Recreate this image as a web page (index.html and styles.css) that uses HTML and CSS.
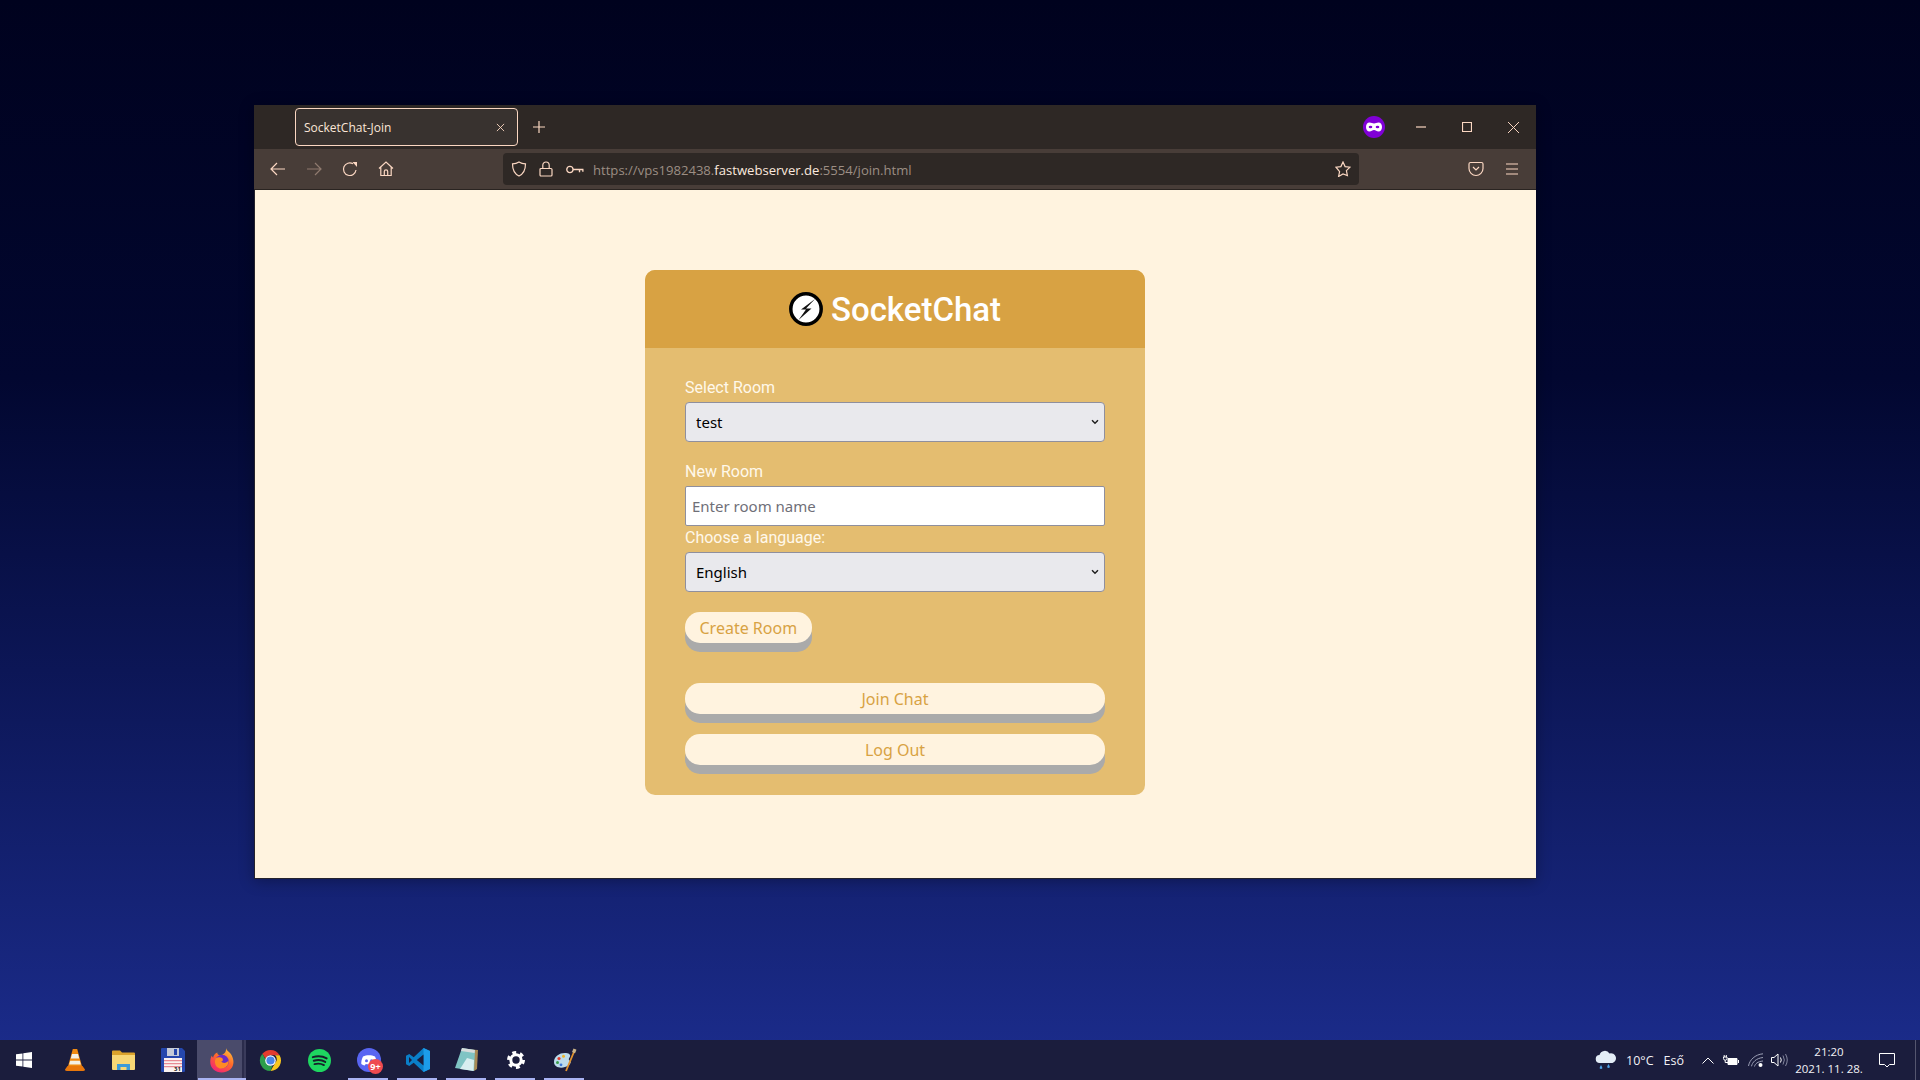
FILE: index.html
```html
<!DOCTYPE html>
<html lang="en">
<head>
  <meta charset="UTF-8">
  <meta name="viewport" content="width=device-width, initial-scale=1.0">
  <title>SocketChat-Join</title>
  <link rel="stylesheet" href="styles.css">
</head>
<body>
  <div class="desktop">
    <div class="window">
      <div class="tabbar">
        <div class="tab">
          <span class="tab-title">SocketChat-Join</span>
          <svg class="ico10" viewBox="0 0 10 10"><path d="M1 1l8 8M9 1l-8 8"/></svg>
        </div>
        <div class="newtab"><svg class="ico12" viewBox="0 0 12 12"><path d="M6 0v12M0 6h12"/></svg></div>
        <div class="grow"></div>
        <svg class="mask" viewBox="0 0 22 22">
          <circle cx="11" cy="11" r="11" fill="#8000d7"/>
          <path d="M6.5 6.500c1.800 0 3 1 4.500 1s2.700-1 4.500-1c2.200 0 3.500 2 3.500 4.500s-1.300 4.500-3.500 4.500c-1.800 0-3-1.500-4.500-1.500s-2.700 1.500-4.500 1.500C4.300 15.500 3 13.500 3 11s1.300-4.500 3.500-4.500z" fill="#fff"/>
          <ellipse cx="7.500" cy="11" rx="1.800" ry="1.300" fill="#8000d7"/>
          <ellipse cx="14.500" cy="11" rx="1.800" ry="1.300" fill="#8000d7"/>
        </svg>
        <div class="winbtn"><svg class="ico10" viewBox="0 0 10 10"><path d="M0 5h10"/></svg></div>
        <div class="winbtn"><svg class="ico10" viewBox="0 0 10 10"><path d="M.5 .5h9v9h-9z"/></svg></div>
        <div class="winbtn"><svg class="ico10 thin" viewBox="0 0 10 10"><path d="M0 0l10 10M10 0L0 10"/></svg></div>
      </div>

      <div class="toolbar">
        <div class="toolbtn"><svg class="ico16" viewBox="0 0 16 16"><path d="M15 8H1M7 2L1 8l6 6"/></svg></div>
        <div class="toolbtn dim"><svg class="ico16" viewBox="0 0 16 16"><path d="M1 8h14M9 2l6 6-6 6"/></svg></div>
        <div class="toolbtn"><svg class="ico16" viewBox="0 0 16 16"><path d="M14 9a6.300 6.300 0 1 1-3-6.200"/><path d="M10.500 1L15 1v5z" class="fill"/></svg></div>
        <div class="toolbtn"><svg class="ico16" viewBox="0 0 16 16"><path d="M1 7.500L8 1l7 6.500M2.800 6v8.500h10.400V6M6.300 14.500V10.500a1.700 1.700 0 0 1 3.400 0v4"/></svg></div>

        <div class="urlbar">
          <svg class="ico16" viewBox="0 0 16 16"><path d="M8 1c2 1.300 4 1.800 6.500 1.800C14.500 9 12.500 13 8 15 3.500 13 1.500 9 1.500 2.800 4 2.800 6 2.300 8 1z"/></svg>
          <svg class="ico16 lock" viewBox="0 0 16 16"><path d="M3 7.500h10a1 1 0 0 1 1 1V14a1 1 0 0 1-1 1H3a1 1 0 0 1-1-1V8.500a1 1 0 0 1 1-1zM4.800 7.500V4.200a3.200 3.200 0 0 1 6.400 0v3.300"/></svg>
          <svg class="key" viewBox="0 0 16 8"><circle cx="3.500" cy="4" r="2.800"/><path d="M6.300 4H15.500M12 4v2.500M15 4v2"/></svg>
          <span class="url">https://vps1982438.<b>fastwebserver.de</b>:5554/join.html</span>
          <svg class="ico16 star" viewBox="0 0 16 16"><path d="M8 1l2.100 4.600 4.900 .6-3.600 3.400 1 4.900L8 13l-4.400 2.500 1-4.900L1 6.200l4.900-.6z"/></svg>
        </div>

        <div class="toolbtn push"><svg class="ico16" viewBox="0 0 16 16"><path d="M2.500 1.500h11A1.500 1.500 0 0 1 15 3v4.500a7 7 0 0 1-14 0V3a1.500 1.500 0 0 1 1.500-1.500zM5 6l3 3 3-3"/></svg></div>
        <div class="toolbtn"><svg class="ico16" viewBox="0 0 16 16"><path d="M2 3h12M2 8h12M2 13h12"/></svg></div>
      </div>

      <div class="page">
        <div class="join-container">
          <header class="join-header">
            <svg class="logo" viewBox="0 0 34 34">
              <circle cx="17" cy="17" r="15.200" fill="#fff" stroke="#000" stroke-width="3.500"/>
              <path d="M26 7L12 17.500h5L9.500 28l13-11.500H17z" fill="#111"/>
            </svg>
            <h1>SocketChat</h1>
          </header>
          <main class="join-main">
            <div class="form-control">
              <label for="room">Select Room</label>
              <select id="room"><option>test</option></select>
            </div>
            <div>
              <label for="newroom">New Room</label>
              <input id="newroom" type="text" placeholder="Enter room name">
            </div>
            <label class="lang-label" for="lang">Choose a language:</label>
            <div class="form-control">
              <select id="lang"><option>English</option></select>
            </div>
            <button class="btn">Create Room</button>
            <button class="btn btn-wide first">Join Chat</button>
            <button class="btn btn-wide">Log Out</button>
          </main>
        </div>
      </div>
    </div>
  </div>

  <div class="taskbar">
    <div class="task start">
      <svg width="16" height="16" viewBox="0 0 16 16" fill="#fff"><path d="M0 2.300l6.500-.9v6.200H0zM7.300 1.300L16 0v7.600H7.300zM0 8.400h6.500v6.200L0 13.700zM7.300 8.400H16V16l-8.700-1.300z"/></svg>
    </div>
    <div class="task">
      <svg width="20" height="24" viewBox="0 0 20 24">
        <path d="M7.800 1h4.400l5 18H2.800z" fill="#f08a12"/>
        <path d="M7 6h6l1.200 4.500H5.800zM5.200 12.800h9.600l1 3.700H4.200z" fill="#f4f0e6"/>
        <path d="M2.500 18h15l2.500 3.500q0 1.500-2 1.500H2q-2 0-2-1.500z" fill="#e8770c"/>
      </svg>
    </div>
    <div class="task">
      <svg width="23" height="21" viewBox="0 0 23 21">
        <path d="M0 1.500A1 1 0 0 1 1 .5h7l2 2h12a1 1 0 0 1 1 1V7H0z" fill="#dca32c"/>
        <path d="M0 5h23v14a1 1 0 0 1-1 1H1a1 1 0 0 1-1-1z" fill="#f8d775"/>
        <path d="M5 20v-6h13v6h-3.500v-3h-6v3z" fill="#3d9bd8"/>
      </svg>
    </div>
    <div class="task">
      <svg width="24" height="24" viewBox="0 0 24 24">
        <path d="M1 0h20l3 3v20a1 1 0 0 1-1 1H1a1 1 0 0 1-1-1V1a1 1 0 0 1 1-1z" fill="#2547ad"/>
        <path d="M6 0h12v8H6z" fill="#c5cbd8"/>
        <path d="M13 1h3v6h-3z" fill="#2547ad"/>
        <path d="M3 10h18v14H3z" fill="#fbf2f0"/>
        <path d="M3 12h18v1.300H3zM3 15h18v1.300H3zM3 18h18v1.300H3z" fill="#e88a94"/>
        <text x="13" y="23" class="floppy-date">31</text>
      </svg>
    </div>
    <div class="task active">
      <svg width="24" height="25" viewBox="0 0 24 25">
        <defs>
          <linearGradient id="ffx" x1="0.800" y1="0" x2="0.200" y2="1">
            <stop offset="0" stop-color="#ffc33a"/>
            <stop offset="0.450" stop-color="#ff6a2a"/>
            <stop offset="1" stop-color="#f2207a"/>
          </linearGradient>
        </defs>
        <path d="M16 0c.5 3 4 4 5.500 7 2.500 4.500 3 10-.8 14-4 4-12.500 4.800-17.200 .5C-.5 18-.5 12 1.800 7.500c.2 1 .6 1.800 1.300 2.200C3.500 7.500 5 5.500 7.500 4.600 7 6 8 7 10 7.200 14 7 16.500 4 16 0z" fill="url(#ffx)"/>
        <circle cx="12" cy="13.500" r="6.800" fill="#6b2bc4"/>
        <path d="M5.500 10.500c2-1.500 5-1.800 6.500-.6 1.600 1.400 1 3.400-1 3.700 2 2.300 6 1.600 7.500-1 .6 4-2.500 8-7 8-4.600 0-8-4.500-6-10.100z" fill="#ff8a24"/>
      </svg>
    </div>
    <div class="task">
      <svg width="23" height="23" viewBox="0 0 24 24">
        <path d="M12 1a11 11 0 0 1 9.500 5.500H12a5.500 5.500 0 0 0-5.200 3.700L3.500 5A11 11 0 0 1 12 1z" fill="#e33b2e"/>
        <path d="M21.500 6.500A11 11 0 0 1 12 23l4.700-8.200a5.500 5.500 0 0 0 0-8.300z" fill="#f8c61c"/>
        <path d="M3.500 5l4.800 8.300a5.500 5.500 0 0 0 5.700 4.300L12 23A11 11 0 0 1 3.500 5z" fill="#2c9e4b"/>
        <circle cx="12" cy="12" r="5.500" fill="#fff"/>
        <circle cx="12" cy="12" r="4.300" fill="#4a86e8"/>
      </svg>
    </div>
    <div class="task">
      <svg width="23" height="23" viewBox="0 0 24 24">
        <circle cx="12" cy="12" r="12" fill="#1ed760"/>
        <path d="M5 8.500c5-1.500 10.500-1 14.500 1.300M6 12.300c4.200-1.200 8.700-.8 12 1.200M6.800 15.800c3.500-.9 7-.6 9.800 1" fill="none" stroke="#16202a" stroke-width="2" stroke-linecap="round"/>
      </svg>
    </div>
    <div class="task">
      <svg width="24" height="24" viewBox="0 0 24 24">
        <circle cx="12" cy="12" r="12" fill="#5865f2"/>
        <path d="M6 8.500c3.500-1.700 8.500-1.700 12 0 1.300 2.500 1.800 5 1.700 7.500-1 .8-2.300 1.200-3.500 1.400l-.9-1.400c-2.200 .6-4.400 .6-6.600 0l-.9 1.400c-1.200-.2-2.500-.6-3.500-1.400C4.200 13.500 4.700 11 6 8.500z" fill="#fff"/>
        <circle cx="9.500" cy="12.700" r="1.500" fill="#5865f2"/>
        <circle cx="14.500" cy="12.700" r="1.500" fill="#5865f2"/>
      </svg>
      <span class="badge">9+</span>
      <i class="open"></i>
    </div>
    <div class="task">
      <svg width="24" height="24" viewBox="0 0 24 24">
        <path d="M17.500 0L24 3v18l-6.500 3-9.800-9.300L3.300 18 0 16.300V7.700L3.300 6l4.400 3.300z" fill="#0a7fc9"/>
        <path d="M17.500 0L24 3v18l-6.500 3z" fill="#1c9cea"/>
        <path d="M17.500 6.500L10.800 12l6.700 5.500zM3 9v6l3-3z" fill="#1b1d3d"/>
      </svg>
      <i class="open"></i>
    </div>
    <div class="task">
      <svg width="23" height="24" viewBox="0 0 23 24">
        <path d="M8 1l15 1 -1 19-3 2z" fill="#a88a56"/>
        <path d="M7 0l13 2 -1 21L0 20z" fill="#7fc4c4"/>
        <path d="M7 0l13 2 -.5 3L6 3z" fill="#d8dcdc"/>
        <path d="M12 10l7 2-.5 11L5 21z" fill="#d8eef0"/>
      </svg>
      <i class="open"></i>
    </div>
    <div class="task">
      <svg width="18" height="18" viewBox="0 0 18 18">
        <circle cx="9" cy="9" r="5.200" fill="none" stroke="#fff" stroke-width="3"/>
        <circle cx="9" cy="9" r="7.500" fill="none" stroke="#fff" stroke-width="3" stroke-dasharray="3.900 3.950"/>
      </svg>
      <i class="open"></i>
    </div>
    <div class="task">
      <svg width="24" height="24" viewBox="0 0 24 24">
        <path d="M1 14C1 8 7 4.500 13 5c4 .4 5 2.500 3.500 4.500-1 1.500-1 2.500 .5 3.300 1.500 1 .6 3.500-2 5C11 20.500 1 21 1 14z" fill="#bcdcec"/>
        <circle cx="6" cy="10.500" r="1.600" fill="#e33b2e"/>
        <circle cx="10.500" cy="8.300" r="1.500" fill="#f0b429"/>
        <circle cx="4.500" cy="14.500" r="1.500" fill="#3a9e4b"/>
        <circle cx="8" cy="16.800" r="1.400" fill="#3a78d8"/>
        <path d="M22 1.500L13 23" stroke="#e0922e" stroke-width="1.800"/>
        <path d="M20.500 .5l3 1.300-1.500 3.500-3-1.300z" fill="#c9b48a"/>
      </svg>
      <i class="open"></i>
    </div>

    <div class="grow"></div>

    <div class="tray">
      <svg class="weather" width="22" height="20" viewBox="0 0 22 20">
        <path d="M5 13a4 4 0 0 1-.5-8A5.500 5.500 0 0 1 14.500 3.500 4.800 4.800 0 0 1 17.500 13z" fill="#e3edf7"/>
        <path d="M6 15l-1.200 2.200a1.300 1.300 0 1 0 2.400 0zM13.500 14l-1.200 2.200a1.300 1.300 0 1 0 2.400 0z" fill="#4da3e8"/>
      </svg>
      <span class="temp">10°C</span>
      <span class="rain">Eső</span>
      <svg class="chevron" width="12" height="7" viewBox="0 0 12 7"><path d="M.5 6.500L6 1l5.500 5.500"/></svg>
      <svg class="battery" width="16" height="11" viewBox="0 0 16 11">
        <path d="M5 3.500h9v6H5z" fill="#fff" stroke="#fff"/>
        <path d="M15.500 5v3M1.200 0v2M3.300 0v2M.5 2h3.500v1.500a1.700 1.700 0 0 1-3.500 0zM2.200 5.200V7.500H5" stroke="#fff" fill="none"/>
      </svg>
      <svg class="wifi" width="16" height="14" viewBox="0 0 16 14">
        <path d="M.5 13C1.500 7 7 1.500 15 .8M3.500 13.300c.8-4 4.500-8 11.500-8.800M6.500 13.500c.5-2.500 3-5 8.500-5.500" fill="none" stroke="#9b9fb5"/>
        <circle cx="12.500" cy="12" r="2" fill="#fff"/>
      </svg>
      <svg class="speaker" width="17" height="14" viewBox="0 0 17 14">
        <path d="M.5 4.500h2.500L7 1v12L3 9.500H.5z" fill="none" stroke="#fff"/>
        <path d="M9.500 4.500q1.500 2.500 0 5" fill="none" stroke="#fff"/>
        <path d="M12 2.500q2.700 4.500 0 9M14.500 1q3.500 6 0 12" fill="none" stroke="#84879f"/>
      </svg>
      <div class="clock"><span>21:20</span><span>2021. 11. 28.</span></div>
      <svg class="notify" width="16" height="15" viewBox="0 0 16 15"><path d="M.5 .5h15v11h-5L8 14 5.500 11.500h-5z"/></svg>
      <i class="show-desktop"></i>
    </div>
  </div>
</body>
</html>
```

FILE: styles.css
```css
:root {
  --peach: #fbd7c2;
  --tab-bg: #2e2825;
  --tool-bg: #483d38;
  --page: #fff3df;
  --gold-dark: #d8a243;
  --gold: #e4bd70;
}

* {
  box-sizing: border-box;
}

body {
  margin: 0;
  width: 1920px;
  height: 1080px;
  overflow: hidden;
  display: flex;
  flex-direction: column;
  font-family: 'Roboto', sans-serif;
  background: linear-gradient(#00021e 0%, #020730 35%, #0c1656 62%, #1c2d8e 100%);
}

.desktop {
  height: 1040px;
  padding: 105px 384px 0 254px;
}

.window {
  height: 774px;
  display: flex;
  flex-direction: column;
  box-shadow: 0 2px 14px rgba(0, 0, 0, 0.3);
}

.grow {
  flex: 1;
}

.ico10,
.ico12,
.ico16,
.key {
  fill: none;
  stroke: var(--peach);
  stroke-width: 1.2;
  flex: none;
}

.ico10 { width: 10px; height: 10px; }
.ico12 { width: 12px; height: 12px; }
.ico16 { width: 16px; height: 16px; }

.winbtn .thin {
  width: 11px;
  height: 11px;
  stroke-width: 0.9;
}

.ico16 .fill {
  fill: var(--peach);
  stroke: none;
}

/* tab strip */
.tabbar {
  height: 44px;
  background: var(--tab-bg);
  display: flex;
  align-items: center;
  padding-left: 41px;
  font-family: 'Open Sans', sans-serif;
}

.tab {
  width: 223px;
  height: 38px;
  padding: 0 12px 0 8px;
  background: #38322f;
  border: 1px solid var(--peach);
  border-radius: 4px;
  display: flex;
  align-items: center;
  justify-content: space-between;
  color: #fbe6d8;
  font-size: 12px;
}

.tab .ico10 {
  width: 9px;
  height: 9px;
  stroke-width: 1;
}

.newtab {
  width: 42px;
  display: flex;
  justify-content: center;
}

.mask {
  width: 22px;
  height: 22px;
  margin-right: 13px;
}

.winbtn {
  width: 46px;
  display: flex;
  justify-content: center;
}

/* toolbar */
.toolbar {
  height: 41px;
  background: var(--tool-bg);
  border-bottom: 1px solid #2a2421;
  display: flex;
  align-items: center;
  padding: 0 6px;
}

.toolbtn {
  width: 36px;
  display: flex;
  justify-content: center;
}

.toolbtn.dim {
  opacity: 0.4;
}

.toolbtn.push {
  margin-left: auto;
}

.urlbar {
  width: 856px;
  height: 32px;
  margin-left: 99px;
  padding: 0 8px;
  background: var(--tab-bg);
  border-radius: 4px;
  display: flex;
  align-items: center;
}

.lock {
  margin-left: 11px;
}

.key {
  width: 18px;
  height: 9px;
  margin-left: 12px;
}

.url {
  margin: 1px 0 0 9px;
  font-family: 'Open Sans', sans-serif;
  font-size: 13.100px;
  color: #9c8e84;
}

.url b {
  font-weight: 400;
  color: #fbe9de;
}

.star {
  margin-left: auto;
}

/* chat join page */
.page {
  flex: 1;
  background: var(--page);
  box-shadow: inset 1px -1px 0 #24222c;
  display: flex;
  justify-content: center;
  padding-top: 80px;
}

.join-container {
  width: 500px;
  height: 525px;
  border-radius: 10px;
  overflow: hidden;
  background: var(--gold);
}

.join-header {
  height: 78px;
  background: var(--gold-dark);
  display: flex;
  align-items: center;
  justify-content: center;
  gap: 8px;
}

.logo {
  width: 34px;
  height: 34px;
}

.join-header h1 {
  margin: 0;
  font-size: 33px;
  font-weight: 500;
  color: #fff;
}

.join-main {
  padding: 30px 40px;
  color: #fff;
}

.form-control {
  margin-bottom: 20px;
}

label {
  display: block;
  margin-bottom: 5px;
  font-size: 16px;
  line-height: 19px;
  color: #fff8ea;
}

.lang-label {
  margin-top: 2px;
}

select,
input {
  display: block;
  width: 100%;
  height: 40px;
  font-family: 'Noto Sans', sans-serif;
  font-size: 15px;
  border: 1px solid #8f8f9d;
  border-radius: 4px;
  color: #000;
}

select {
  appearance: none;
  padding: 0 10px;
  background: #e9e9ed url("data:image/svg+xml,%3Csvg xmlns='http://www.w3.org/2000/svg' width='8' height='6' viewBox='0 0 8 6'%3E%3Cpath d='M1 1.200l3 3 3-3' fill='none' stroke='%23222' stroke-width='1.500'/%3E%3C/svg%3E") no-repeat right 5px center;
}

input {
  padding: 0 6px;
  background: #fff;
  border-radius: 2px;
}

input::placeholder {
  color: #6f6f78;
  opacity: 1;
}

.btn {
  display: block;
  height: 31px;
  padding: 0 14.500px;
  border: 0;
  border-radius: 15px;
  background: var(--page);
  color: var(--gold-dark);
  font-family: 'Noto Sans', sans-serif;
  font-size: 16px;
  box-shadow: 0 9px #aaa;
  margin-bottom: 20px;
}

.btn-wide {
  width: 100%;
}

.btn-wide.first {
  margin-top: 40px;
}

.btn:last-child {
  margin-bottom: 0;
}

/* windows taskbar */
.taskbar {
  height: 40px;
  background: #1b1d3d;
  display: flex;
  align-items: center;
  color: #fff;
}

.task {
  position: relative;
  width: 49px;
  height: 40px;
  flex: none;
  display: flex;
  align-items: center;
  justify-content: center;
}

.task.start {
  width: 50px;
  padding-right: 2px;
}

.task.active {
  background: linear-gradient(90deg, #4a4b6b 45px, #2b2c4c 45px, #2b2c4c 47px, #3a3b5b 47px);
}

.task.active::after {
  content: "";
  position: absolute;
  left: 1px;
  right: 0;
  bottom: 0;
  height: 2px;
  background: #a9b3f3;
}

.open {
  position: absolute;
  left: 4px;
  right: 5px;
  bottom: 0;
  height: 2px;
  background: #a9b3f3;
}

.badge {
  position: absolute;
  left: 24px;
  top: 19px;
  width: 15px;
  height: 15px;
  border-radius: 50%;
  background: #ef4a50;
  color: #fff;
  font-family: 'Noto Sans', sans-serif;
  font-size: 9px;
  font-weight: 700;
  line-height: 15px;
  text-align: center;
}

.tray {
  height: 40px;
  display: flex;
  align-items: center;
  font-family: 'Open Sans', sans-serif;
  font-size: 12.500px;
  color: #f2f2f6;
}

.temp {
  margin-left: 9px;
}

.rain {
  margin-left: 10px;
}

.chevron {
  margin-left: 18px;
  fill: none;
  stroke: #fff;
}

.battery {
  margin-left: 9px;
}

.wifi {
  margin-left: 9px;
}

.speaker {
  margin-left: 7px;
}

.clock {
  width: 70px;
  margin-left: 6px;
  display: flex;
  flex-direction: column;
  align-items: center;
  gap: 2px;
  font-size: 11.500px;
  line-height: 15px;
  white-space: nowrap;
}

.notify {
  margin-left: 15px;
  fill: none;
  stroke: #fff;
}

.show-desktop {
  display: block;
  width: 1px;
  height: 40px;
  margin-left: 20px;
  margin-right: 4px;
  background: #55566f;
}

.floppy-date {
  font-family: 'Noto Sans', sans-serif;
  font-size: 6px;
  font-weight: 700;
  fill: #222;
}
```
